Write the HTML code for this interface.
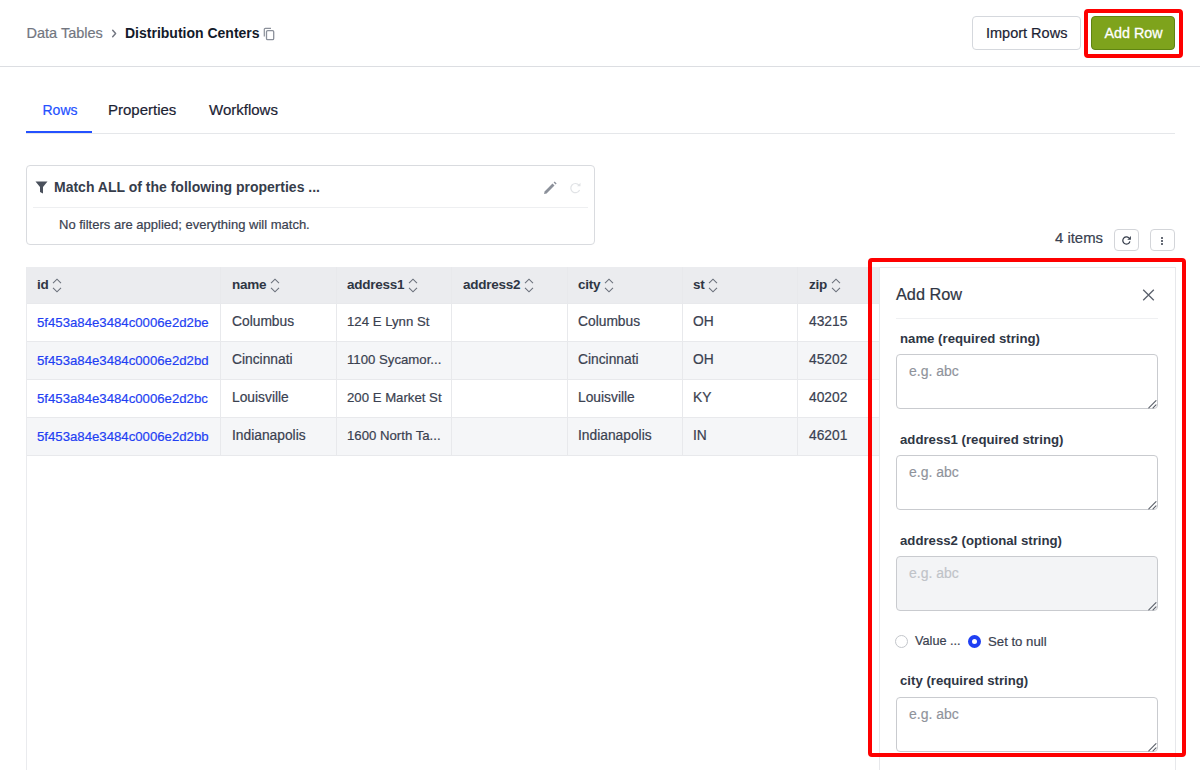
<!DOCTYPE html>
<html><head><meta charset="utf-8">
<style>
*{box-sizing:border-box;margin:0;padding:0}
html,body{width:1200px;height:770px;overflow:hidden;background:#fff;font-family:"Liberation Sans",sans-serif;color:#2f3644}
.abs{position:absolute}
.t{position:absolute;white-space:nowrap;line-height:1}
.rg{-webkit-text-stroke:0.2px currentColor}
/* header */
#hdrline{left:0;top:66px;width:1200px;height:1px;background:#dcdee2}
.btn{position:absolute;border-radius:4px;font-size:14.5px;line-height:1;white-space:nowrap}
#imp{left:972px;top:16px;width:109px;height:34px;border:1px solid #d5d8dd;color:#1b2233;background:#fff}
#add{left:1091px;top:16px;width:84px;height:34px;border:1px solid #5f8412;background:#7ea31c;color:#fff}
.red{position:absolute;border:4px solid #fe0000;border-radius:4px}
/* tabs */
#tabline{left:26px;top:133px;width:1149px;height:1px;background:#e5e7ea}
#tabul{left:26px;top:131px;width:66px;height:2px;background:#2451ff}
/* filter */
#filter{left:26px;top:165px;width:569px;height:80px;border:1px solid #d9dbdf;border-radius:4px}
#fdiv{left:33px;top:207px;width:555px;height:1px;background:#eeeff1}
/* table */
#tbl{left:26px;top:267px;width:1149px;height:504px;border-left:1px solid #eaebee}
.hd{position:absolute;top:267px;height:37px;background:#ebecef}
.row{position:absolute;left:27px;width:852px;height:38px}
.vl{position:absolute;width:1px;background:#e8e9ec}
.hl{position:absolute;height:1px;background:#e8e9ec}
.th{font-weight:bold;font-size:13.5px;letter-spacing:-0.25px;color:#2f3644}
.td{font-size:13.8px;color:#3a4150;-webkit-text-stroke:0.2px currentColor}
.td.lnk{font-size:13.2px}
.td.tr{font-size:13.2px}
.lnk{color:#1f3ff3}
.sort{position:relative;vertical-align:top;margin-left:3.5px;top:0px}
/* panel */
#panel{left:879px;top:267px;width:297px;height:520px;border:1px solid #e7e8eb;background:#fff}
.ta{position:absolute;left:896px;width:262px;height:55px;border:1px solid #c9cbcf;border-radius:4px;background:#fff}
.ta.dis{background:#f3f4f6}
.lbl{font-weight:bold;font-size:13.2px;color:#2f3644}
.ph{font-size:14px;color:#8f939b;-webkit-text-stroke:0.15px currentColor}
</style></head><body>

<!-- header -->
<div class="t rg" style="left:26.5px;top:26px;font-size:14.5px;color:#72767f">Data Tables</div>
<svg class="abs" style="left:110px;top:28px" width="8" height="11" viewBox="0 0 8 11"><path d="M2.7 2.3L5.6 5.5L2.7 8.7" fill="none" stroke="#737782" stroke-width="1.5" stroke-linecap="round" stroke-linejoin="round"/></svg>
<div class="t" style="left:125px;top:26px;font-size:14px;font-weight:bold;color:#131a2a">Distribution Centers</div>
<svg class="abs" style="left:262px;top:27px" width="14" height="14" viewBox="0 0 14 14"><path d="M2.3 9.5V2.3a1 1 0 0 1 1-1H9" fill="none" stroke="#8b909a" stroke-width="1.2"/><rect x="4.5" y="3.6" width="7.2" height="9" rx="1.2" fill="none" stroke="#8b909a" stroke-width="1.3"/></svg>

<div id="hdrline" class="abs"></div>
<div id="imp" class="btn"><span class="t rg" style="left:13px;top:9px">Import Rows</span></div>
<div class="red" style="left:1084px;top:9px;width:99px;height:49px"></div>
<div id="add" class="btn"><span class="t" style="left:12.5px;top:8.5px;font-size:14.3px;-webkit-text-stroke:0.3px #fff">Add Row</span></div>

<!-- tabs -->
<div class="t rg" style="left:42.5px;top:102.5px;font-size:14px;color:#2451ff">Rows</div>
<div class="t rg" style="left:108px;top:102px;font-size:15px;color:#1b2233">Properties</div>
<div class="t rg" style="left:209px;top:102px;font-size:15px;color:#1b2233">Workflows</div>
<div id="tabline" class="abs"></div>
<div id="tabul" class="abs"></div>

<!-- filter -->
<div id="filter" class="abs"></div>
<svg class="abs" style="left:35px;top:181px" width="13" height="13" viewBox="0 0 13 13"><path d="M0.5 0.5h12L8 6v6.5L5 11V6z" fill="#4a505c"/></svg>
<div class="t" style="left:54px;top:180px;font-size:14px;font-weight:bold;color:#363d4b">Match ALL of the following properties ...</div>
<svg class="abs" style="left:543px;top:181px" width="14" height="14" viewBox="0 0 14 14"><path d="M1 13l0.6-2.6L9.5 2.5l2 2L3.6 12.4z" fill="#8b909a"/><path d="M10.6 1.4l1-1 2 2-1 1z" fill="#8b909a"/></svg>
<svg class="abs" style="left:569px;top:182px" width="13" height="12" viewBox="0 0 13 12"><path d="M10 3.2A4.6 4.6 0 1 0 10.6 8" fill="none" stroke="#e1e3e6" stroke-width="1.2"/><path d="M11.5 0.8v3.5H8z" fill="#e1e3e6"/></svg>
<div id="fdiv" class="abs"></div>
<div class="t rg" style="left:59px;top:218px;font-size:13px;color:#3a4150">No filters are applied; everything will match.</div>

<!-- items bar -->
<div class="t rg" style="left:1055px;top:231px;font-size:14.9px;color:#3a4150">4 items</div>
<div class="abs" style="left:1114px;top:229px;width:25px;height:22px;border:1px solid #d3d5d9;border-radius:4px"></div>
<svg class="abs" style="left:1121px;top:235px" width="11" height="11" viewBox="0 0 11 11"><path d="M7.9 2.9A3.6 3.6 0 1 0 8.9 6.3" fill="none" stroke="#353c4a" stroke-width="1.25"/><path d="M9.9 1.1v3.6H6.3z" fill="#353c4a"/></svg>
<div class="abs" style="left:1150px;top:229px;width:25px;height:22px;border:1px solid #d3d5d9;border-radius:4px"></div>
<div class="abs" style="left:1161.2px;top:236.8px;width:1.9px;height:1.9px;background:#353c4a;border-radius:50%"></div>
<div class="abs" style="left:1161.2px;top:240px;width:1.9px;height:1.9px;background:#353c4a;border-radius:50%"></div>
<div class="abs" style="left:1161.2px;top:243.2px;width:1.9px;height:1.9px;background:#353c4a;border-radius:50%"></div>

<!-- table -->
<div id="tbl" class="abs"></div>
<div class="hd" style="left:27px;width:852px"></div>
<div class="row" style="top:341px;background:#f5f6f8"></div>
<div class="row" style="top:417px;background:#f5f6f8"></div>
<div class="hl" style="left:27px;top:303px;width:852px"></div>
<div class="hl" style="left:27px;top:341px;width:852px"></div>
<div class="hl" style="left:27px;top:379px;width:852px"></div>
<div class="hl" style="left:27px;top:417px;width:852px"></div>
<div class="hl" style="left:27px;top:455px;width:852px"></div>
<div class="vl" style="left:220px;top:267px;height:188px"></div>
<div class="vl" style="left:336px;top:267px;height:188px"></div>
<div class="vl" style="left:451px;top:267px;height:188px"></div>
<div class="vl" style="left:567px;top:267px;height:188px"></div>
<div class="vl" style="left:682px;top:267px;height:188px"></div>
<div class="vl" style="left:797px;top:267px;height:188px"></div>

<div class="t th hname" style="left:37px;top:278px">id<svg class="sort" width="10" height="15" viewBox="0 0 10 15"><path d="M1 5.2L5 1.2L9 5.2M1 9.8L5 13.8L9 9.8" fill="none" stroke="#6b717c" stroke-width="1.1"/></svg></div>
<div class="t th hname" style="left:232px;top:278px">name<svg class="sort" width="10" height="15" viewBox="0 0 10 15"><path d="M1 5.2L5 1.2L9 5.2M1 9.8L5 13.8L9 9.8" fill="none" stroke="#6b717c" stroke-width="1.1"/></svg></div>
<div class="t th hname" style="left:347px;top:278px">address1<svg class="sort" width="10" height="15" viewBox="0 0 10 15"><path d="M1 5.2L5 1.2L9 5.2M1 9.8L5 13.8L9 9.8" fill="none" stroke="#6b717c" stroke-width="1.1"/></svg></div>
<div class="t th hname" style="left:463px;top:278px">address2<svg class="sort" width="10" height="15" viewBox="0 0 10 15"><path d="M1 5.2L5 1.2L9 5.2M1 9.8L5 13.8L9 9.8" fill="none" stroke="#6b717c" stroke-width="1.1"/></svg></div>
<div class="t th hname" style="left:578px;top:278px">city<svg class="sort" width="10" height="15" viewBox="0 0 10 15"><path d="M1 5.2L5 1.2L9 5.2M1 9.8L5 13.8L9 9.8" fill="none" stroke="#6b717c" stroke-width="1.1"/></svg></div>
<div class="t th hname" style="left:693px;top:278px">st<svg class="sort" width="10" height="15" viewBox="0 0 10 15"><path d="M1 5.2L5 1.2L9 5.2M1 9.8L5 13.8L9 9.8" fill="none" stroke="#6b717c" stroke-width="1.1"/></svg></div>
<div class="t th hname" style="left:809px;top:278px">zip<svg class="sort" width="10" height="15" viewBox="0 0 10 15"><path d="M1 5.2L5 1.2L9 5.2M1 9.8L5 13.8L9 9.8" fill="none" stroke="#6b717c" stroke-width="1.1"/></svg></div>
<div class="t td lnk" style="left:37px;top:316px">5f453a84e3484c0006e2d2be</div>
<div class="t td" style="left:232px;top:315px">Columbus</div>
<div class="t td tr" style="left:347px;top:315px">124 E Lynn St</div>
<div class="t td" style="left:578px;top:315px">Columbus</div>
<div class="t td" style="left:693px;top:315px">OH</div>
<div class="t td" style="left:809px;top:315px">43215</div>
<div class="t td lnk" style="left:37px;top:354px">5f453a84e3484c0006e2d2bd</div>
<div class="t td" style="left:232px;top:353px">Cincinnati</div>
<div class="t td tr" style="left:347px;top:353px">1100 Sycamor...</div>
<div class="t td" style="left:578px;top:353px">Cincinnati</div>
<div class="t td" style="left:693px;top:353px">OH</div>
<div class="t td" style="left:809px;top:353px">45202</div>
<div class="t td lnk" style="left:37px;top:392px">5f453a84e3484c0006e2d2bc</div>
<div class="t td" style="left:232px;top:391px">Louisville</div>
<div class="t td tr" style="left:347px;top:391px">200 E Market St</div>
<div class="t td" style="left:578px;top:391px">Louisville</div>
<div class="t td" style="left:693px;top:391px">KY</div>
<div class="t td" style="left:809px;top:391px">40202</div>
<div class="t td lnk" style="left:37px;top:430px">5f453a84e3484c0006e2d2bb</div>
<div class="t td" style="left:232px;top:429px">Indianapolis</div>
<div class="t td tr" style="left:347px;top:429px">1600 North Ta...</div>
<div class="t td" style="left:578px;top:429px">Indianapolis</div>
<div class="t td" style="left:693px;top:429px">IN</div>
<div class="t td" style="left:809px;top:429px">46201</div>

<!-- panel -->
<div id="panel" class="abs"></div>
<div class="t rg" style="left:896px;top:286px;font-size:16.3px;color:#2f3644">Add Row</div>
<svg class="abs" style="left:1142px;top:289px" width="13" height="12" viewBox="0 0 13 12"><path d="M1.2 0.7l10.6 10.6M11.8 0.7L1.2 11.3" stroke="#5b616d" stroke-width="1.3"/></svg>
<div class="hl" style="left:896px;top:318px;width:262px;background:#eff0f2"></div>

<div class="t lbl" style="left:900px;top:332px">name (required string)</div>
<div class="ta" style="top:354px"></div><svg class="abs" style="left:1146px;top:397px" width="12" height="12" viewBox="0 0 12 12"><path d="M2.8 10.8L10 3.6M7 10.8L10 7.8" stroke="#5a5f69" stroke-width="1.1" stroke-linecap="round"/></svg>
<div class="t ph" style="left:909px;top:364px">e.g. abc</div>

<div class="t lbl" style="left:900px;top:433px">address1 (required string)</div>
<div class="ta" style="top:455px"></div><svg class="abs" style="left:1146px;top:498px" width="12" height="12" viewBox="0 0 12 12"><path d="M2.8 10.8L10 3.6M7 10.8L10 7.8" stroke="#5a5f69" stroke-width="1.1" stroke-linecap="round"/></svg>
<div class="t ph" style="left:909px;top:465px">e.g. abc</div>

<div class="t lbl" style="left:900px;top:534px">address2 (optional string)</div>
<div class="ta dis" style="top:556px"></div><svg class="abs" style="left:1146px;top:599px" width="12" height="12" viewBox="0 0 12 12"><path d="M2.8 10.8L10 3.6M7 10.8L10 7.8" stroke="#5a5f69" stroke-width="1.1" stroke-linecap="round"/></svg>
<div class="t ph" style="left:909px;top:566px;color:#c0c3c8">e.g. abc</div>

<div class="abs" style="left:895px;top:635px;width:13px;height:13px;border:1px solid #c3c6cb;border-radius:50%;background:#fff"></div>
<div class="t rg" style="left:915px;top:635px;font-size:12.7px;color:#3a4150">Value ...</div>
<div class="abs" style="left:967.5px;top:635px;width:13px;height:13px;border:4.2px solid #1f3ff3;border-radius:50%;background:#fff"></div>
<div class="t rg" style="left:988px;top:635px;font-size:13.2px;color:#3a4150">Set to null</div>

<div class="t lbl" style="left:900px;top:674px">city (required string)</div>
<div class="ta" style="top:697px"></div><svg class="abs" style="left:1146px;top:740px" width="12" height="12" viewBox="0 0 12 12"><path d="M2.8 10.8L10 3.6M7 10.8L10 7.8" stroke="#5a5f69" stroke-width="1.1" stroke-linecap="round"/></svg>
<div class="t ph" style="left:909px;top:707px">e.g. abc</div>

<div class="red" style="left:868px;top:258px;width:318px;height:499px"></div>
</body></html>
